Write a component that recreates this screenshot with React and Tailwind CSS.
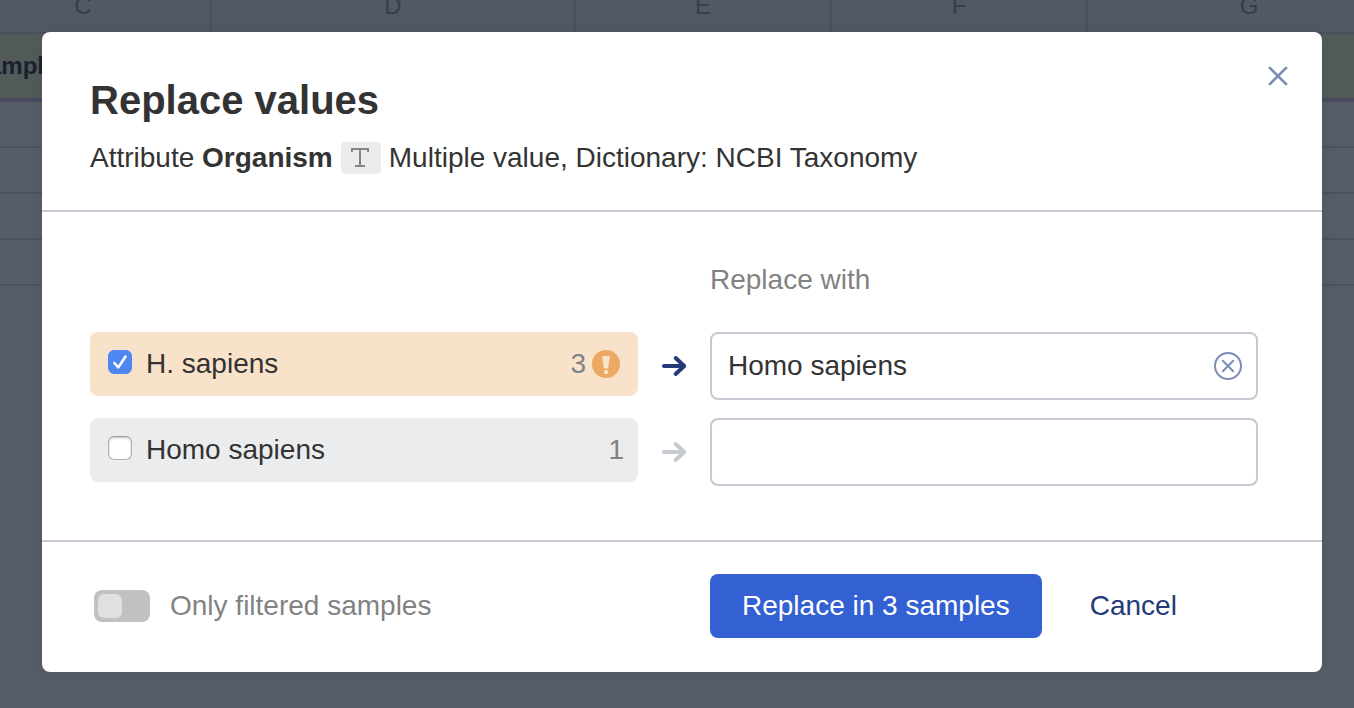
import { useState } from "react";

const columns = [
  { name: "C", width: "w-[256px]" },
  { name: "D", width: "w-[364px]" },
  { name: "E", width: "w-[256px]" },
  { name: "F", width: "w-[256px]" },
  { name: "G", width: "w-[324px]" },
];

function Sheet() {
  return (
    <div className="overflow-hidden" aria-hidden="true">
      <table className="-ml-11 w-[1456px] table-fixed border-separate border-spacing-0">
        <thead>
          <tr>
            {columns.map((c) => (
              <th
                key={c.name}
                className={`${c.width} h-[34px] border-r-2 border-b-2 border-[#4a505d] bg-[#525866] p-0 pb-5 text-2xl leading-3 font-normal text-[#383d4b]`}
              >
                {c.name}
              </th>
            ))}
          </tr>
        </thead>
        <tbody>
          <tr>
            <td
              colSpan={5}
              className="h-[68px] border-b-4 border-[#484b5f] bg-[#525a5a] py-0 pl-4 text-2xl font-bold text-[#1b1f2e]"
            >
              Sample
            </td>
          </tr>
          {[1, 2, 3, 4].map((r) => (
            <tr key={r}>
              <td colSpan={5} className="h-[46px] border-b-2 border-[#4c515e] p-0" />
            </tr>
          ))}
        </tbody>
      </table>
    </div>
  );
}

function Arrow({ active }) {
  return (
    <svg
      viewBox="0 0 28 24"
      className={`h-6 w-7 ${active ? "text-[#233a7a]" : "text-[#c6c9d1]"}`}
      fill="none"
      stroke="currentColor"
      strokeWidth="4"
      strokeLinecap="round"
      strokeLinejoin="round"
      aria-hidden="true"
    >
      <path d="M4 12H24M15.700 4L24.200 12L15.700 20" />
    </svg>
  );
}

function WarningIcon() {
  return (
    <svg viewBox="0 0 28 28" className="mr-1 ml-1.5 size-7" aria-hidden="true">
      <circle cx="14" cy="14" r="14" fill="#eba963" />
      <path d="M11.400 6H16.600Q17.900 6 17.800 7.300L16.200 17.600Q16 18.600 15 18.600H13Q12 18.600 11.800 17.600L10.200 7.300Q10.100 6 11.400 6Z" fill="#f9e2ca" />
      <circle cx="14" cy="22" r="2.200" fill="#f9e2ca" />
    </svg>
  );
}

function ValueRow({ row, onToggle, onChange }) {
  return (
    <div className="grid grid-cols-[1fr_72px_1fr] items-start">
      <label
        className={`flex h-16 items-center rounded-lg pr-[14px] pl-[18px] ${row.warn ? "bg-[#f9e2ca]" : "bg-[#ebecee]"}`}
      >
        <span className="mr-[14px] mb-1 grid size-6">
          <input
            type="checkbox"
            checked={row.checked}
            onChange={onToggle}
            className="col-start-1 row-start-1 size-6 appearance-none rounded-md border border-[#b0b0b2] border-t-[#9c9c9e] bg-white shadow-[inset_0_1px_2px_rgba(0,0,0,0.25)] checked:border-[#4c87f3] checked:bg-[#4c87f3] checked:shadow-none"
          />
          {row.checked && (
            <svg
              viewBox="0 0 24 24"
              className="pointer-events-none col-start-1 row-start-1 size-6"
              fill="none"
              stroke="white"
              strokeWidth="2.600"
              strokeLinecap="round"
              strokeLinejoin="round"
              aria-hidden="true"
            >
              <path d="M6.300 13L10.300 17.400L17.500 6.500" />
            </svg>
          )}
        </span>
        <span className="flex-1 text-[#333333]">{row.name}</span>
        <span className="text-[#828282]">{row.count}</span>
        {row.warn && <WarningIcon />}
      </label>
      <div className="flex h-[68px] items-center justify-center">
        <Arrow active={row.checked} />
      </div>
      <div className="flex h-[68px] items-center rounded-lg border-2 border-[#c6c9d1] pr-[14px] pl-4">
        <input
          type="text"
          aria-label={`Replace ${row.name} with`}
          value={row.value}
          onChange={(e) => onChange(e.target.value)}
          className="h-full min-w-0 flex-1 bg-transparent text-[#333333] outline-none"
        />
        {row.value && (
          <button type="button" aria-label="Clear" onClick={() => onChange("")}>
            <svg
              viewBox="0 0 28 28"
              className="size-7"
              fill="none"
              stroke="#7b8db5"
              strokeWidth="2"
              strokeLinecap="round"
              aria-hidden="true"
            >
              <circle cx="14" cy="14" r="13" />
              <path d="M8.800 8.800L19.200 19.200M19.200 8.800L8.800 19.200" />
            </svg>
          </button>
        )}
      </div>
    </div>
  );
}

export default function App() {
  const [rows, setRows] = useState([
    { name: "H. sapiens", count: 3, checked: true, warn: true, value: "Homo sapiens" },
    { name: "Homo sapiens", count: 1, checked: false, warn: false, value: "" },
  ]);
  const update = (i, patch) =>
    setRows(rows.map((r, j) => (j === i ? { ...r, ...patch } : r)));

  return (
    <div className="relative min-h-screen overflow-hidden bg-[#565c68] font-['Liberation_Sans',Arial,sans-serif] text-[28px] leading-10">
      <div className="absolute inset-x-0 top-0">
        <Sheet />
      </div>
      <div className="relative pt-8 pr-8 pb-9 pl-[42px]">
        <div
          role="dialog"
          aria-labelledby="dialog-title"
          className="rounded-lg bg-white shadow-[0_0_16px_rgba(0,0,0,0.06)]"
        >
          <header className="flex items-start justify-between border-b-2 border-[#c6c9d1] pr-8 pb-8 pl-12">
            <div className="pt-11">
              <h1 id="dialog-title" className="text-[40px] leading-[48px] font-bold text-[#333333]">
                Replace values
              </h1>
              <p className="mt-[14px] flex flex-wrap items-center gap-x-2 text-[#333333]">
                <span>
                  Attribute <b>Organism</b>
                </span>
                <span className="flex h-8 w-10 items-center justify-center rounded bg-[#ebecee]">
                  <svg
                    viewBox="0 0 20 20"
                    className="size-5"
                    fill="none"
                    stroke="#858585"
                    strokeWidth="2"
                    aria-hidden="true"
                  >
                    <path d="M1 4V1H17V4M9 1V18M4 18H14" />
                  </svg>
                </span>
                <span>Multiple value, Dictionary: NCBI Taxonomy</span>
              </p>
            </div>
            <button type="button" aria-label="Close" className="pt-8">
              <svg
                viewBox="0 0 24 24"
                className="size-6"
                fill="none"
                stroke="#7b8db5"
                strokeWidth="2.700"
                strokeLinecap="round"
                aria-hidden="true"
              >
                <path d="M3.900 3.900L20.100 20.100M20.100 3.900L3.900 20.100" />
              </svg>
            </button>
          </header>

          <div className="pt-12 pr-16 pb-[54px] pl-12">
            <div className="grid grid-cols-[1fr_72px_1fr]">
              <h2 className="col-start-3 text-[#828282]">Replace with</h2>
            </div>
            <div className="mt-8 flex flex-col gap-[18px]">
              {rows.map((row, i) => (
                <ValueRow
                  key={row.name}
                  row={row}
                  onToggle={() => update(i, { checked: !row.checked })}
                  onChange={(value) => update(i, { value })}
                />
              ))}
            </div>
          </div>

          <footer className="grid grid-cols-[1fr_72px_1fr] items-center border-t-2 border-[#c6c9d1] pt-8 pr-16 pb-[34px] pl-12">
            <label className="flex items-center gap-5 pl-1 text-[#828282]">
              <input
                type="checkbox"
                role="switch"
                className="h-8 w-14 appearance-none rounded-lg bg-[#c1c1c1] p-1 before:block before:size-6 before:rounded-md before:bg-[#e0e0e0] checked:bg-[#3360d3] checked:before:ml-6"
              />
              Only filtered samples
            </label>
            <div className="col-start-3 flex items-center gap-12">
              <button type="button" className="h-16 rounded-lg bg-[#3360d3] px-8 whitespace-nowrap text-white">
                Replace in 3 samples
              </button>
              <button type="button" className="text-[#233a7a]">
                Cancel
              </button>
            </div>
          </footer>
        </div>
      </div>
    </div>
  );
}
